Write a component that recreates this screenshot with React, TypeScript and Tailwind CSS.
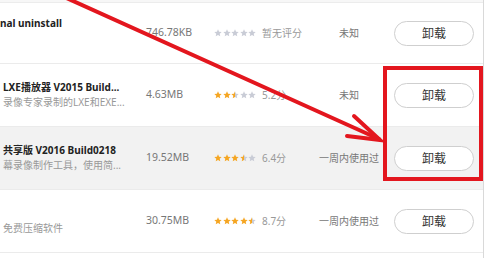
import React from 'react'

type Row = {
  title: string
  desc: string
  size: string
  stars: number
  score: string
  status: string
  active?: boolean
}

const rows: Row[] = [
  { title: 'nal uninstall', desc: '', size: '746.78KB', stars: 0, score: '暂无评分', status: '未知' },
  { title: 'LXE播放器 V2015 Build...', desc: '录像专家录制的LXE和EXE...', size: '4.63MB', stars: 2.5, score: '5.2分', status: '未知' },
  { title: '共享版 V2016 Build0218', desc: '幕录像制作工具，使用简...', size: '19.52MB', stars: 3.5, score: '6.4分', status: '一周内使用过', active: true },
  { title: '', desc: '免费压缩软件', size: '30.75MB', stars: 4.5, score: '8.7分', status: '一周内使用过' },
]

function Star({ fill, id }: { fill: number; id: string }) {
  const pts = '5,0.4 6.35,3.4 9.6,3.75 7.15,5.95 7.85,9.2 5,7.55 2.15,9.2 2.85,5.95 0.4,3.75 3.65,3.4'
  return (
    <svg width="8" height="8" viewBox="0 0 10 10" className="shrink-0">
      <defs>
        <linearGradient id={id}>
          <stop offset={`${fill * 100}%`} stopColor="#f5a623" />
          <stop offset={`${fill * 100}%`} stopColor="#c9ccd6" />
        </linearGradient>
      </defs>
      <polygon points={pts} fill={`url(#${id})`} />
    </svg>
  )
}

function Stars({ value, rowKey }: { value: number; rowKey: number }) {
  return (
    <div className="flex w-[42px] justify-between">
      {[0, 1, 2, 3, 4].map(i => (
        <Star key={i} id={`s${rowKey}-${i}`} fill={Math.max(0, Math.min(1, value - i))} />
      ))}
    </div>
  )
}

export default function App() {
  return (
    <div
      className="relative w-[486px] h-[258px] overflow-hidden bg-white"
      style={{ fontFamily: '"Noto Sans", "Noto Sans CJK SC", sans-serif' }}
    >
      <div className="w-[484px] h-full border-r border-[#d9d9d9]">
        <div className="h-[3px] bg-[#f7f7f7] border-b border-[#ececec]" />
        {rows.map((r, i) => (
          <div
            key={i}
            className={`flex items-center border-b border-[#ebebeb] ${i === 0 ? 'h-[61px]' : 'h-[63px]'} ${r.active ? 'bg-[#f2f2f2]' : 'bg-white'}`}
          >
            <div className={`w-[146px] flex flex-col justify-center whitespace-nowrap overflow-hidden ${i === 0 ? 'pb-[5px]' : 'pl-[3px]'}`}>
              <div className="h-[15px] leading-[15px] text-[10px] font-bold text-[#222]">{r.title}</div>
              <div className="h-[15px] leading-[15px] text-[10px] text-[#999]">{r.desc}</div>
            </div>
            <div className="w-[68px] text-[10.5px] text-[#777]">{r.size}</div>
            <div className="w-[100px] flex items-center gap-[6px] whitespace-nowrap">
              <Stars value={r.stars} rowKey={i} />
              <span className="text-[10px] text-[#999]">{r.score}</span>
            </div>
            <div className="w-[70px] text-center text-[10px] text-[#777] whitespace-nowrap">{r.status}</div>
            <div className="pl-[10px]">
              <button className="w-[80px] h-[25px] rounded-full border border-[#cfcfcf] bg-white text-[12px] text-[#333] leading-none">
                卸载
              </button>
            </div>
          </div>
        ))}
      </div>

      {/* red highlight box */}
      <div className="absolute left-[383px] top-[66px] w-[100px] h-[115px] border-[4px] border-[#e3161e]" />

      {/* red arrow */}
      <svg className="absolute left-0 top-0" width="486" height="258" viewBox="0 0 486 258">
        <g stroke="#e3161e" strokeWidth="4" strokeLinecap="round" fill="none">
          <line x1="62" y1="-4" x2="379" y2="139" />
          <polyline points="354,116 380,140 347,136" strokeLinejoin="miter" />
        </g>
      </svg>
    </div>
  )
}
